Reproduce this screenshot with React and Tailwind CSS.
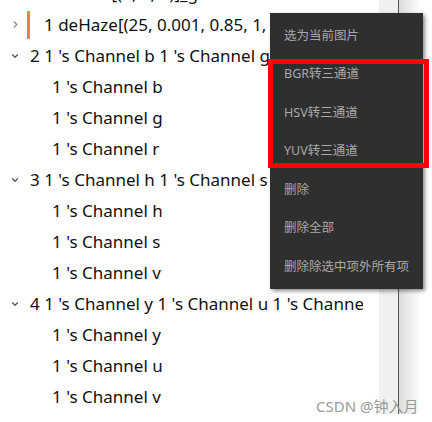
import { ChevronDown, ChevronRight } from "lucide-react";

const groups = [
  {
    title: "2 1 's Channel b 1 's Channel g 1 's Channel r",
    items: ["1 's Channel b", "1 's Channel g", "1 's Channel r"],
  },
  {
    title: "3 1 's Channel h 1 's Channel s 1 's Channel v",
    items: ["1 's Channel h", "1 's Channel s", "1 's Channel v"],
  },
  {
    title: "4 1 's Channel y 1 's Channel u 1 's Channel v",
    items: ["1 's Channel y", "1 's Channel u", "1 's Channel v"],
  },
];

const menu = [
  "选为当前图片",
  "BGR转三通道",
  "HSV转三通道",
  "YUV转三通道",
  "删除",
  "删除全部",
  "删除除选中项外所有项",
];

function Row({ children, pl }) {
  return (
    <div className={`flex h-[31px] items-center whitespace-nowrap ${pl}`}>
      {children}
    </div>
  );
}

export default function App() {
  return (
    <div
      className="relative h-[422px] w-[432px] overflow-hidden bg-white text-[17px] text-[#111]"
      style={{ fontFamily: '"Noto Sans", "Noto Sans CJK SC", sans-serif' }}
    >
      <div className="flex items-start">
        <div className="w-[363px] shrink-0 overflow-hidden">
          <div className="-mt-[22px]">
            <Row pl="pl-[44px]">0 source[(1, 1, 1)]_g</Row>
            <div className="flex h-[31px] items-center whitespace-nowrap">
              <ChevronRight className="ml-[10px] h-[11px] w-[11px] shrink-0 text-[#888]" strokeWidth={2.5} />
              <div className="ml-[6px] h-[28px] w-[3px] shrink-0 bg-[#f0803c]" />
              <span className="ml-[14px]">1 deHaze[(25, 0.001, 0.85, 1, 0.5)]</span>
            </div>
            {groups.map((g) => (
              <div key={g.title}>
                <div className="flex h-[31px] items-center whitespace-nowrap">
                  <ChevronDown className="ml-[10px] h-[10px] w-[10px] shrink-0 text-[#555]" strokeWidth={3} />
                  <span className="ml-[10px]">{g.title}</span>
                </div>
                {g.items.map((it, i) => (
                  <Row key={i} pl="pl-[52px]">
                    {it}
                  </Row>
                ))}
              </div>
            ))}
          </div>
        </div>
        <div className="ml-[16px] h-[414px] w-[19px] shrink-0 bg-[#f0f0f0]" />
        <div className="h-[414px] w-px shrink-0 bg-[#555]" />
        <div className="h-[414px] w-[22px] shrink-0 bg-gradient-to-r from-[#dcdcdc] to-white" />
      </div>

      <div className="absolute left-[270px] top-[13px] w-[153px] bg-[#2f2f2f] pb-[2px] pt-[4px] shadow-[2px_2px_4px_rgba(0,0,0,0.45)]">
        {menu.map((m) => (
          <div
            key={m}
            className="flex h-[38.5px] items-center whitespace-nowrap pl-[14px] text-[12.5px] text-[#a9a9a9]"
          >
            {m}
          </div>
        ))}
      </div>

      <div className="absolute left-[268px] top-[59px] h-[109px] w-[161px] border-[5px] border-[#ff0000]" />

      <div className="absolute left-[316px] top-[395px] text-[15px] text-[#9a9a9a]">
        CSDN @钟入月
      </div>
    </div>
  );
}
